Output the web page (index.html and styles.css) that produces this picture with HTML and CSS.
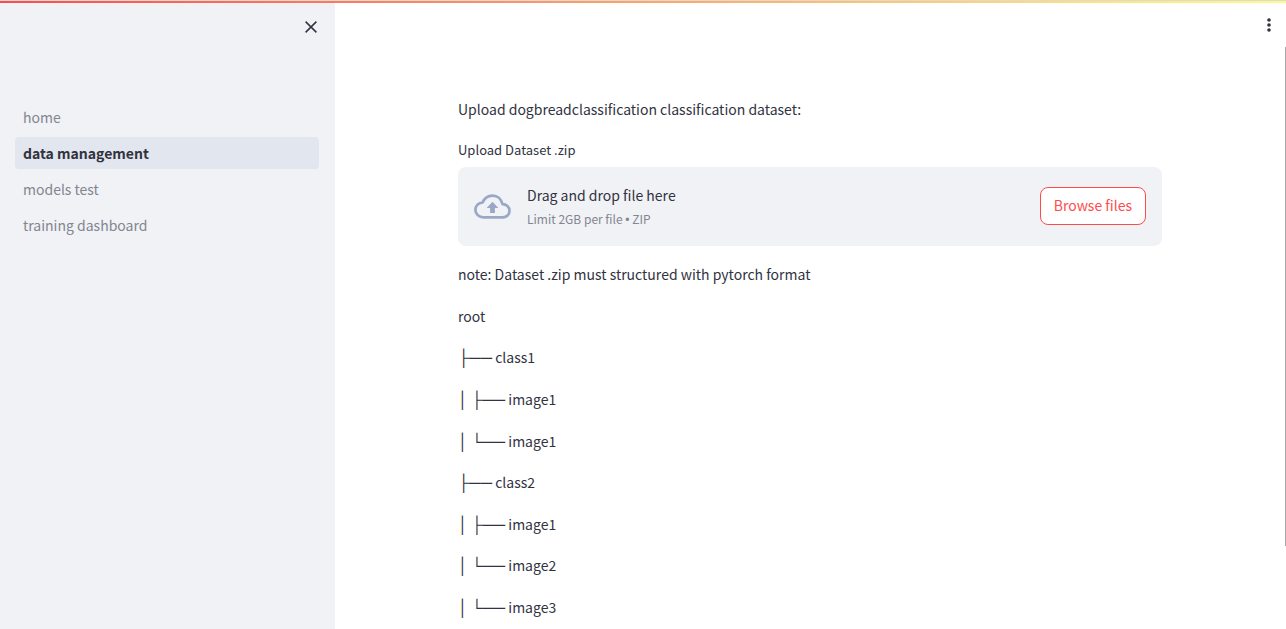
FILE: index.html
```
<!DOCTYPE html>
<html lang="en">
<head>
<meta charset="utf-8">
<title>data management</title>
<link rel="stylesheet" href="styles.css">
</head>
<body>
<div class="decoration"></div>
<div class="app">
  <aside class="sidebar">
    <div class="sidebar-header">
      <button class="icon-button" type="button" aria-label="Close sidebar">
        <svg width="16" height="20" viewBox="0 0 16 20" aria-hidden="true"><path d="M2.6 4.6 13.4 15.4M13.4 4.6 2.6 15.4" fill="none" stroke="currentColor" stroke-width="1.5"/></svg>
      </button>
    </div>
    <nav class="nav">
      <a class="nav-link" href="#">home</a>
      <a class="nav-link nav-link-active" href="#" aria-current="page">data management</a>
      <a class="nav-link" href="#">models test</a>
      <a class="nav-link" href="#">training dashboard</a>
    </nav>
  </aside>
  <main class="main">
    <button class="icon-button menu-button" type="button" aria-label="Main menu">
      <svg width="16" height="16" viewBox="0 0 16 16" aria-hidden="true"><g fill="currentColor"><circle cx="8" cy="3" r="1.8"/><circle cx="8" cy="8" r="1.8"/><circle cx="8" cy="13" r="1.8"/></g></svg>
    </button>
    <div class="scroll-thumb"></div>
    <div class="content">
      <p class="text">Upload dogbreadclassification classification dataset:</p>
      <section class="uploader">
        <label class="uploader-label" for="browse">Upload Dataset .zip</label>
        <div class="dropzone">
          <svg class="cloud" width="37" height="25" viewBox="0 0 37 25" aria-hidden="true"><path d="M9.6 23.3C5 23.3 1.4 20.2 1.4 16C1.4 11.8 4.6 8.9 8.6 8.4C10.4 4.4 14 1.6 18.4 1.6C23.7 1.6 27.4 5.2 28.4 10.1C32.4 10.1 35.5 13 35.5 16.7C35.5 20.5 32.6 23.3 28.8 23.3Z" fill="none" stroke="currentColor" stroke-width="2.7" stroke-linejoin="round"/><path d="M18.5 7.8 24.4 13.9H20.9V19H16.1V13.9H12.6Z" fill="currentColor"/></svg>
          <div class="instructions">
            <span class="text">Drag and drop file here</span>
            <small class="limit">Limit 2GB per file <span class="bullet">•</span> ZIP</small>
          </div>
          <button class="browse" id="browse" type="button">Browse files</button>
        </div>
      </section>
      <p class="text">note: Dataset .zip must structured with pytorch format</p>
      <p class="text">root</p>
      <p class="text"><span class="branch">├──</span> class1</p>
      <p class="text"><span class="branch">│</span> <span class="branch">├──</span> image1</p>
      <p class="text"><span class="branch">│</span> <span class="branch">└──</span> image1</p>
      <p class="text"><span class="branch">├──</span> class2</p>
      <p class="text"><span class="branch">│</span> <span class="branch">├──</span> image1</p>
      <p class="text"><span class="branch">│</span> <span class="branch">└──</span> image2</p>
      <p class="text"><span class="branch">│</span> <span class="branch">└──</span> image3</p>
    </div>
  </main>
</div>
</body>
</html>
```
FILE: styles.css
```
* {
  box-sizing: border-box;
}

body {
  margin: 0;
  height: 100vh;
  display: flex;
  flex-direction: column;
  overflow: hidden;
  background: #fff;
  color: #31333f;
  font-family: "Noto Sans CJK SC", sans-serif;
  font-size: 14px;
  line-height: 1.83;
}

.decoration {
  flex: none;
  height: 3px;
  border-top: 1px solid #dadada;
  background: linear-gradient(90deg, #ff4b4b, #fffd80);
}

.app {
  flex: 1;
  min-height: 0;
  display: flex;
}

.sidebar {
  flex: none;
  width: 335px;
  padding: 14px 16px 0 15px;
  background: #f0f2f6;
}

.sidebar-header {
  display: flex;
  justify-content: flex-end;
  height: 84px;
}

.icon-button {
  display: flex;
  align-items: center;
  justify-content: center;
  width: 16px;
  height: 20px;
  padding: 0;
  border: 0;
  background: none;
  color: #31333f;
}

.nav {
  display: flex;
  flex-direction: column;
  gap: 4px;
}

.nav-link {
  padding: 0 8px;
  border-radius: 4px;
  color: #838690;
  line-height: 32px;
  text-decoration: none;
}

.nav-link-active {
  background: #e2e6ee;
  color: #31333f;
  font-weight: 700;
}

.main {
  position: relative;
  flex: 1;
  min-width: 0;
  padding-right: 1px;
  overflow: hidden;
}

.menu-button {
  position: absolute;
  top: 12px;
  right: 9px;
}

.scroll-thumb {
  position: absolute;
  top: 44px;
  right: 0;
  width: 1px;
  height: 499px;
  background: #a8a8a8;
}

.content {
  display: flex;
  flex-direction: column;
  gap: 16px;
  max-width: 736px;
  margin: 0 auto;
  padding: 94px 16px 0;
}

.text {
  margin: 0;
}

.uploader {
  display: flex;
  flex-direction: column;
  gap: 6px;
}

.uploader-label {
  font-size: 13px;
  line-height: 22px;
}

.dropzone {
  display: flex;
  align-items: center;
  padding: 16px;
  border-radius: 8px;
  background: #f0f2f6;
}

.cloud {
  flex: none;
  margin-right: 16px;
  color: #9aa8c7;
}

.instructions {
  display: flex;
  flex-direction: column;
  flex: 1;
}

.limit {
  color: #838690;
  font-size: 12px;
  line-height: 22px;
}

.browse {
  height: 38px;
  padding: 0 13px 2px;
  border: 1px solid #ff4b4b;
  border-radius: 8px;
  background: #fff;
  color: #ff4b4b;
  font: inherit;
  line-height: 1;
}

.branch,
.bullet {
  font-family: "Liberation Sans", sans-serif;
  line-height: 1;
}

.branch {
  font-size: 16px;
}
```
